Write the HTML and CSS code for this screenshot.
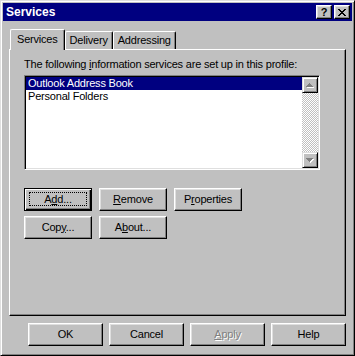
FILE: index.html
```html
<!DOCTYPE html>
<html>
<head>
<meta charset="utf-8">
<link rel="stylesheet" href="styles.css">
</head>
<body>
<div class="window">
  <div class="titlebar">
    <span class="title">Services</span>
    <div class="caps">
      <div class="cap"><span class="help">?</span></div>
      <div class="cap">
        <svg width="8" height="7" viewBox="0 0 8 7" shape-rendering="crispEdges">
          <path d="M0 0h2v1H0zM6 0h2v1H6zM1 1h2v1H1zM5 1h2v1H5zM2 2h4v1H2zM3 3h2v1H3zM2 4h4v1H2zM1 5h2v1H1zM5 5h2v1H5zM0 6h2v1H0zM6 6h2v1H6z" fill="#000"/>
        </svg>
      </div>
    </div>
  </div>
  <div class="content">
    <div class="tabs">
      <div class="tab active">Services</div>
      <div class="tab">Delivery</div>
      <div class="tab">Addressing</div>
    </div>
    <div class="panel">
      <div class="label">The following <u>i</u>nformation services are set up in this profile:</div>
      <div class="listbox">
        <div class="items">
          <div class="item sel">Outlook Address Book</div>
          <div class="item">Personal Folders</div>
        </div>
        <div class="scrollbar">
          <div class="sbtn">
            <svg width="8" height="5" viewBox="0 0 8 5" shape-rendering="crispEdges">
              <path d="M4 1h1v1H4zM3 2h3v1H3zM2 3h5v1H2zM1 4h7v1H1z" fill="#fff"/>
              <path d="M3 0h1v1H3zM2 1h3v1H2zM1 2h5v1H1zM0 3h7v1H0z" fill="#808080"/>
            </svg>
          </div>
          <div class="track"></div>
          <div class="sbtn">
            <svg width="8" height="5" viewBox="0 0 8 5" shape-rendering="crispEdges">
              <path d="M1 1h7v1H1zM2 2h5v1H2zM3 3h3v1H3zM4 4h1v1H4z" fill="#fff"/>
              <path d="M0 0h7v1H0zM1 1h5v1H1zM2 2h3v1H2zM3 3h1v1H3z" fill="#808080"/>
            </svg>
          </div>
        </div>
      </div>
      <div class="btnrow first">
        <button class="btn default">A<u>d</u>d...</button>
        <button class="btn"><u>R</u>emove</button>
        <button class="btn">P<u>r</u>operties</button>
      </div>
      <div class="btnrow">
        <button class="btn">Cop<u>y</u>...</button>
        <button class="btn">A<u>b</u>out...</button>
      </div>
    </div>
    <div class="footer">
      <button class="btn wide">OK</button>
      <button class="btn wide">Cancel</button>
      <button class="btn wide disabled"><u>A</u>pply</button>
      <button class="btn wide">Help</button>
    </div>
  </div>
</div>
</body>
</html>
```

FILE: styles.css
```css
html, body {
  margin: 0;
  padding: 0;
  background: #c0c0c0;
}
body {
  font-family: "Liberation Sans", Arial, sans-serif;
  font-size: 11px;
  letter-spacing: -0.2px;
  color: #000;
}
.window {
  box-sizing: border-box;
  width: 355px;
  height: 356px;
  background: #c0c0c0;
  border: 1px solid;
  border-color: #dfdfdf #000 #000 #dfdfdf;
  box-shadow: inset 1px 1px #fff, inset -1px -1px #808080;
  padding: 2px;
  display: flex;
  flex-direction: column;
}
.titlebar {
  height: 18px;
  background: #000080;
  display: flex;
  align-items: center;
  justify-content: space-between;
  padding: 0 2px 0 3px;
}
.title {
  color: #fff;
  font-weight: bold;
  font-size: 12px;
  line-height: 18px;
  letter-spacing: 0;
}
.caps {
  display: flex;
  gap: 2px;
}
.cap {
  box-sizing: border-box;
  width: 16px;
  height: 14px;
  background: #c0c0c0;
  border: 1px solid;
  border-color: #fff #000 #000 #fff;
  box-shadow: inset -1px -1px #808080, inset 1px 1px #dfdfdf;
  display: flex;
  align-items: center;
  justify-content: center;
}
.help {
  font-weight: bold;
  font-size: 11px;
  line-height: 11px;
  letter-spacing: 0;
}
.content {
  flex: 1;
  display: flex;
  flex-direction: column;
  padding: 8px 6px 0 6px;
}
.tabs {
  display: flex;
  align-items: flex-end;
  height: 20px;
  padding-left: 1px;
  position: relative;
  z-index: 1;
}
.tab {
  box-sizing: border-box;
  height: 18px;
  padding: 2px 4px 0;
  line-height: 13px;
  border: 1px solid #fff;
  border-bottom: 0;
  border-right-color: #000;
  border-radius: 2px 2px 0 0;
  box-shadow: inset -1px 0 #808080;
  background: #c0c0c0;
  white-space: nowrap;
}
.tab.active {
  height: 21px;
  margin-bottom: -1px;
  padding: 3px 6px 0;
}
.panel {
  box-sizing: border-box;
  height: 267px;
  border: 1px solid;
  border-color: #fff #000 #000 #fff;
  box-shadow: inset -1px -1px #808080;
  padding: 8px 0 0 14px;
}
.label {
  line-height: 13px;
  margin-bottom: 4px;
  white-space: nowrap;
}
.listbox {
  box-sizing: border-box;
  width: 296px;
  height: 95px;
  border: 1px solid;
  border-color: #808080 #fff #fff #808080;
  box-shadow: inset 1px 1px #000, inset -1px -1px #dfdfdf;
  padding: 1px;
  background: #fff;
  display: flex;
}
.items {
  flex: 1;
}
.item {
  line-height: 13px;
  padding-left: 2px;
  white-space: nowrap;
}
.item.sel {
  background: #000080;
  color: #fff;
}
.scrollbar {
  width: 16px;
  display: flex;
  flex-direction: column;
}
.sbtn {
  box-sizing: border-box;
  width: 16px;
  height: 16px;
  background: #c0c0c0;
  border: 1px solid;
  border-color: #dfdfdf #000 #000 #dfdfdf;
  box-shadow: inset 1px 1px #fff, inset -1px -1px #808080;
  display: flex;
  align-items: center;
  justify-content: center;
}
.track {
  flex: 1;
  background-color: #c0c0c0;
  background-image: conic-gradient(#fff 25%, #c0c0c0 0 50%, #fff 0 75%, #c0c0c0 0);
  background-size: 2px 2px;
}
.btnrow {
  display: flex;
  gap: 7px;
  margin-top: 5px;
}
.btnrow.first {
  margin-top: 18px;
}
.btn {
  box-sizing: border-box;
  position: relative;
  width: 68px;
  height: 23px;
  padding: 0 0 1px;
  margin: 0;
  font: inherit;
  letter-spacing: inherit;
  line-height: 13px;
  color: #000;
  background: #c0c0c0;
  border: 1px solid;
  border-color: #fff #000 #000 #fff;
  box-shadow: inset -1px -1px #808080, inset 1px 1px #dfdfdf;
  text-align: center;
}
.btn.default {
  border-color: #000;
  box-shadow: inset 1px 1px #fff, inset -1px -1px #000, inset -2px -2px #808080;
}
.btn.default::after {
  content: "";
  position: absolute;
  top: 3px;
  left: 4px;
  right: 4px;
  bottom: 4px;
  border: 1px dotted #000;
}
.btn.wide {
  width: 75px;
}
.btn.disabled {
  color: #808080;
  text-shadow: 1px 1px #fff;
}
.footer {
  display: flex;
  justify-content: flex-end;
  gap: 6px;
  margin-top: 7px;
}
```
